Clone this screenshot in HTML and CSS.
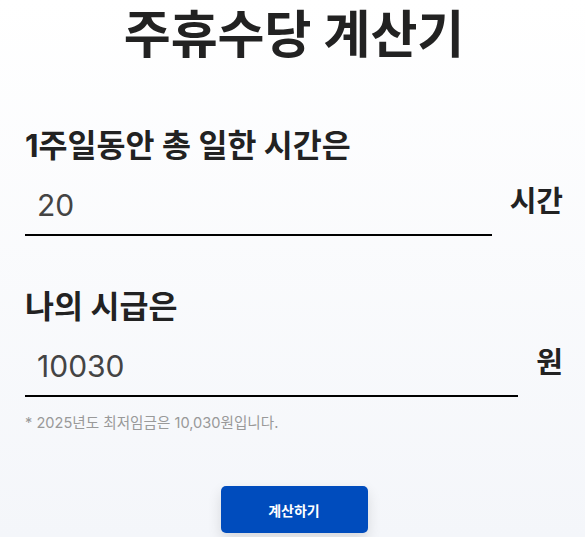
FILE: index.html
```html
<!DOCTYPE html>
<html lang="ko">
<head>
    <meta charset="UTF-8">
    <meta name="viewport" content="width=device-width, initial-scale=1.0">
    <title>주휴수당 계산기</title>
    <link rel="stylesheet" href="styles.css">
</head>
<body>
    <div class="container">
        <h1 class="title">주휴수당 계산기</h1>

        <div class="field">
            <label class="field-label" for="hours">1주일동안 총 일한 시간은</label>
            <div class="input-row">
                <input class="field-input" id="hours" type="text" value="20">
                <span class="unit">시간</span>
            </div>
        </div>

        <div class="field">
            <label class="field-label" for="wage">나의 시급은</label>
            <div class="input-row">
                <input class="field-input" id="wage" type="text" value="10030">
                <span class="unit">원</span>
            </div>
            <p class="note">* 2025년도 최저임금은 10,030원입니다.</p>
        </div>

        <div class="actions">
            <button class="btn-calc">계산하기</button>
        </div>
    </div>
</body>
</html>
```

FILE: styles.css
```css
* {
    margin: 0;
    padding: 0;
    box-sizing: border-box;
}

body {
    font-family: Inter, "Noto Sans CJK KR", sans-serif;
    background: linear-gradient(180deg, #ffffff 0%, #f4f6fa 100%);
    min-height: 100vh;
    color: #222;
}

.container {
    padding: 0 22px 0 25px;
}

.title {
    text-align: center;
    font-size: 51px;
    font-weight: 700;
    line-height: 70px;
    color: #222;
}

.field {
    margin-top: 57px;
}

.field + .field {
    margin-top: 52px;
}

.field-label {
    display: block;
    font-size: 31.5px;
    font-weight: 700;
    line-height: 38px;
    color: #222;
}

.input-row {
    display: flex;
    align-items: center;
    gap: 18px;
}

.field-input {
    flex: 1;
    min-width: 0;
    height: 71px;
    border: none;
    border-bottom: 2px solid #000;
    background: transparent;
    padding: 10px 12px 0;
    font-family: Inter, "Noto Sans CJK KR", sans-serif;
    font-size: 30px;
    color: #444;
    outline: none;
}

.unit {
    font-size: 29px;
    font-weight: 700;
    color: #222;
    margin-bottom: 4px;
}

.note {
    margin-top: 16px;
    font-size: 14.6px;
    line-height: 21px;
    color: #999;
}

.actions {
    display: flex;
    justify-content: center;
    margin-top: 52px;
}

.btn-calc {
    width: 147px;
    height: 47px;
    border: none;
    border-radius: 5px;
    background: #004cbd;
    color: white;
    font-family: Inter, "Noto Sans CJK KR", sans-serif;
    font-size: 14px;
    font-weight: 700;
    box-shadow: 0 6px 14px rgba(0, 0, 0, 0.12);
    cursor: pointer;
}
```
